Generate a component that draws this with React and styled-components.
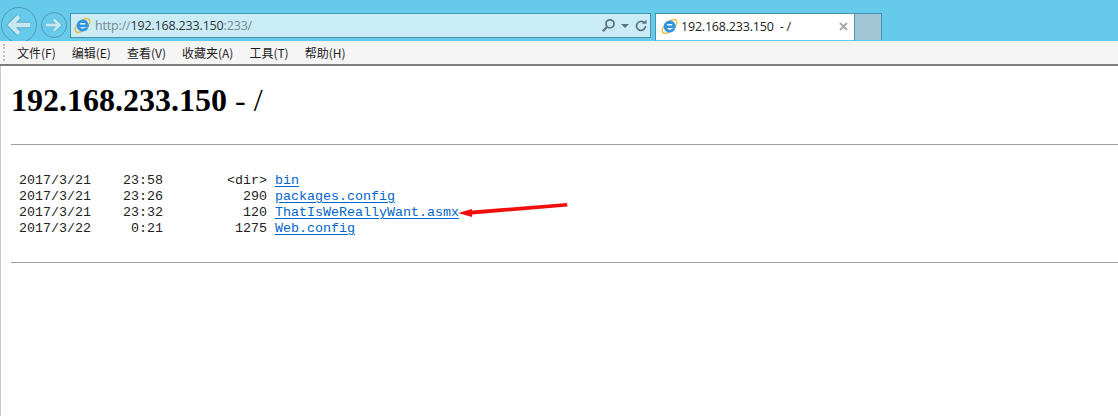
import React from 'react'
import styled, { createGlobalStyle } from 'styled-components'

const GlobalStyle = createGlobalStyle`
    html, body {
        margin: 0;
        padding: 0;
        background: #fff;
        overflow: hidden;
    }
`

const IeLogo = ({ size }) => (
    <svg width={size} height={size} viewBox="0 0 18 18">
        <ellipse cx="9" cy="9" rx="9.500" ry="4.800" transform="rotate(-42 9 9)" fill="none" stroke="#f2b32a" strokeWidth="1.300" />
        <path d="M9.300 2.600a6.400 6.400 0 1 0 6 8.500h-3.700a2.800 2.800 0 0 1-5-.6h9c.4-4.300-2.300-7.900-6.300-7.900z" fill="#2f97e2" />
        <rect x="6.500" y="6.400" width="5.400" height="1.600" fill="#eaf6fd" />
    </svg>
)

const App = () => {
    return (
        <Window>
            <GlobalStyle />
            <TitleBar>
                <BackButton>
                    <svg width="26" height="24" viewBox="0 0 26 24">
                        <path d="M24 12H5M13 3.500 4.500 12l8.500 8.500" fill="none" stroke="#5fa9c1" strokeWidth="6.500" />
                        <path d="M24 12H5M13 3.500 4.500 12l8.500 8.500" fill="none" stroke="#c5e8f3" strokeWidth="4.500" />
                    </svg>
                </BackButton>
                <ForwardButton>
                    <svg width="18" height="16" viewBox="0 0 18 16">
                        <path d="M1 8h13M9 2.500 14.500 8 9 13.500" fill="none" stroke="#5fa9c1" strokeWidth="4.200" />
                        <path d="M1 8h13M9 2.500 14.500 8 9 13.500" fill="none" stroke="#c5e8f3" strokeWidth="2.800" />
                    </svg>
                </ForwardButton>
                <AddressBar>
                    <IeLogo size={17} />
                    <Url>
                        http://<Host>192.168.233.150</Host>:233/
                    </Url>
                    <AddressTools>
                        <svg width="15" height="15" viewBox="0 0 15 15">
                            <circle cx="9" cy="5.800" r="4" fill="none" stroke="#5d7480" strokeWidth="1.800" />
                            <path d="M6 9 1.800 13.200" stroke="#5d7480" strokeWidth="2.200" />
                        </svg>
                        <Caret />
                        <svg width="14" height="14" viewBox="0 0 14 14">
                            <path d="M11.500 7a4.500 4.500 0 1 1-1.500-3.400" fill="none" stroke="#5d7480" strokeWidth="1.700" />
                            <path d="M8 4.800h4.500V.6z" fill="#5d7480" />
                        </svg>
                    </AddressTools>
                </AddressBar>
                <Tab>
                    <IeLogo size={17} />
                    <TabTitle>192.168.233.150&nbsp; - /</TabTitle>
                    <TabClose>
                        <svg width="9" height="9" viewBox="0 0 9 9">
                            <path d="M1 1l7 7M8 1 1 8" stroke="#a8a8a8" strokeWidth="2" />
                        </svg>
                    </TabClose>
                </Tab>
                <NewTab />
            </TitleBar>
            <MenuBar>
                <Grip />
                <MenuItem>文件(F)</MenuItem>
                <MenuItem>编辑(E)</MenuItem>
                <MenuItem>查看(V)</MenuItem>
                <MenuItem>收藏夹(A)</MenuItem>
                <MenuItem>工具(T)</MenuItem>
                <MenuItem>帮助(H)</MenuItem>
            </MenuBar>
            <Page>
                <Heading>192.168.233.150 <Thin>- /</Thin></Heading>
                <Rule />
                <Listing>
                    {' 2017/3/21    23:58        <dir> '}<FileLink>bin</FileLink>{'\n'}
                    {' 2017/3/21    23:26          290 '}<FileLink>packages.config</FileLink>{'\n'}
                    {' 2017/3/21    23:32          120 '}<FileLink>ThatIsWeReallyWant.asmx</FileLink>{'\n'}
                    {' 2017/3/22     0:21         1275 '}<FileLink>Web.config</FileLink>
                </Listing>
                <Rule />
                <RedArrow width="112" height="18" viewBox="0 0 112 18">
                    <path d="M1 12 L15 8 L15 9.500 L110 2 L110.500 5.500 L15 13.500 L15 16 Z" fill="#f20d0d" />
                </RedArrow>
            </Page>
        </Window>
    )
}

const Window = styled.div`
    width: 1118px;
    height: 416px;
    overflow: hidden;
    display: flex;
    flex-direction: column;
`

const TitleBar = styled.div`
    height: 41px;
    box-sizing: border-box;
    background: #66cbeb;
    display: flex;
    align-items: flex-start;
    flex-shrink: 0;
`

const NavCircle = styled.div`
    box-sizing: border-box;
    border-radius: 50%;
    border: 1px solid #4f9ab5;
    display: flex;
    align-items: center;
    justify-content: center;
`

const BackButton = styled(NavCircle)`
    width: 36px;
    height: 36px;
    margin: 7px 0 0 1px;
`

const ForwardButton = styled(NavCircle)`
    width: 26px;
    height: 26px;
    margin: 12px 0 0 4px;
`

const AddressBar = styled.div`
    box-sizing: border-box;
    width: 581px;
    height: 25px;
    margin: 13px 0 0 3px;
    padding: 0 2px 0 3px;
    background: #c9ecf7;
    border: 1px solid #4a93ad;
    display: flex;
    align-items: center;
    gap: 4px;
`

const Url = styled.span`
    flex: 1;
    font: 12.5px 'Open Sans', sans-serif;
    letter-spacing: -0.17px;
    color: #7b8a90;
    white-space: nowrap;
`

const Host = styled.span`
    color: #333;
`

const AddressTools = styled.div`
    display: flex;
    align-items: center;
    gap: 5px;
`

const Caret = styled.span`
    width: 0;
    height: 0;
    border-left: 4px solid transparent;
    border-right: 4px solid transparent;
    border-top: 4px solid #5d7480;
`

const Tab = styled.div`
    box-sizing: border-box;
    width: 200px;
    height: 28px;
    margin: 13px 0 0 4px;
    padding: 0 6px 1px 5px;
    background: #fff;
    border: 1px solid #4a93ad;
    border-bottom: 1px solid #66cbeb;
    display: flex;
    align-items: center;
    gap: 3px;
`

const TabTitle = styled.span`
    flex: 1;
    font: 12.5px 'Open Sans', sans-serif;
    letter-spacing: -0.2px;
    color: #222;
    white-space: nowrap;
`

const TabClose = styled.span`
    display: flex;
`

const NewTab = styled.div`
    box-sizing: border-box;
    width: 27px;
    height: 27px;
    margin-top: 13px;
    background: #a2c6d4;
    border: 1px solid #4a93ad;
    border-left: none;
    border-bottom: none;
`

const MenuBar = styled.div`
    box-sizing: border-box;
    height: 25px;
    flex-shrink: 0;
    background: #f5f5f5;
    border-bottom: 2px solid #7d7d7d;
    display: flex;
    align-items: center;
    padding: 0 0 1px 3px;
    gap: 16px;
`

const Grip = styled.span`
    width: 0;
    height: 17px;
    margin-right: -4px;
    border-left: 2px dotted #c2c2c2;
`

const MenuItem = styled.span`
    font: 12px 'Noto Sans CJK SC', 'Noto Sans', sans-serif;
    color: #1c1c1c;
    white-space: nowrap;
`

const Page = styled.div`
    position: relative;
    flex: 1;
    box-sizing: border-box;
    background: #fff;
    border-left: 1px solid #c8c8c8;
    padding-left: 10px;
`

const Heading = styled.h1`
    margin: 16px 0 0;
    font: bold 32px/37px 'Liberation Serif', serif;
    color: #000;
`

const Thin = styled.span`
    font-weight: normal;
`

const Rule = styled.div`
    height: 1px;
    background: #a0a0a0;
    margin-top: 25px;
`

const Listing = styled.pre`
    margin: 28px 0 0;
    font: 13.33px/16px 'Liberation Mono', monospace;
    color: #222;
    padding-bottom: 1px;
    & + div {
        margin-top: 24px;
    }
`

const FileLink = styled.a`
    color: #0066cc;
    text-decoration: underline;
    text-underline-offset: 2px;
`

const RedArrow = styled.svg`
    position: absolute;
    left: 456px;
    top: 135px;
`

export default App
